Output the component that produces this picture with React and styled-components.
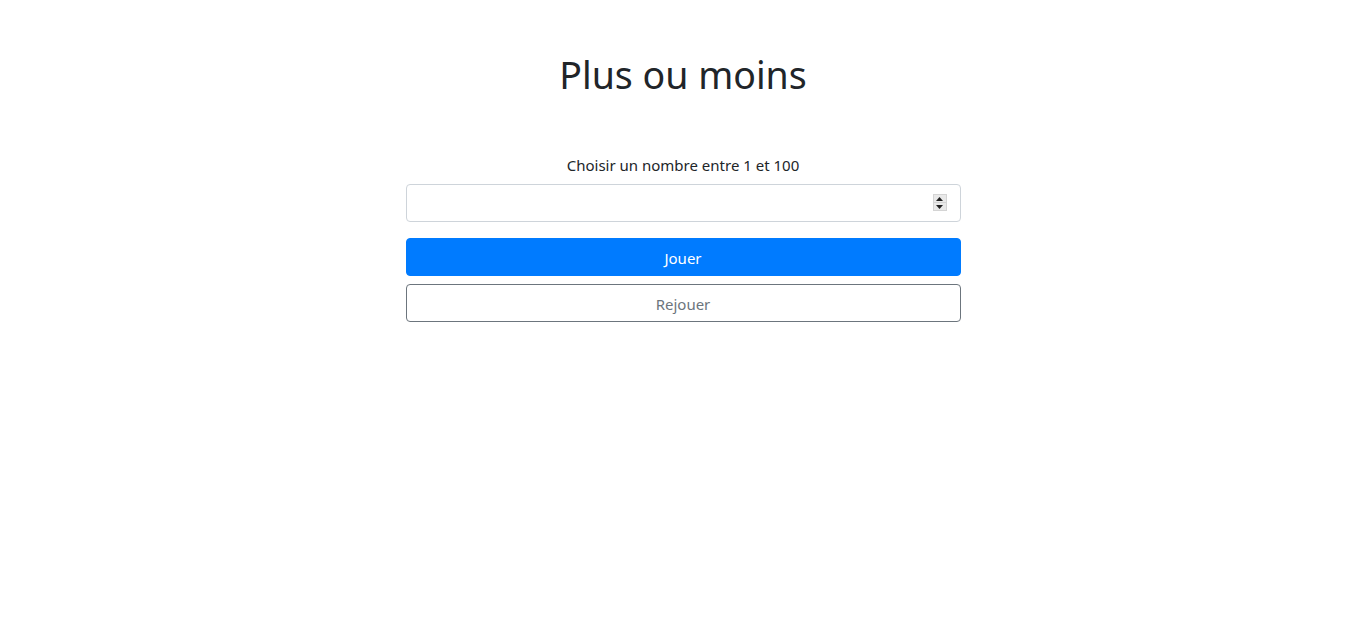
import React from "react";
import styled, { createGlobalStyle } from "styled-components";

const Global = createGlobalStyle`
  html, body { margin: 0; padding: 0; background: #fff; }
  body {
    font-family: "Noto Sans", "Open Sans", sans-serif;
    font-size: 15px;
    line-height: 1.5;
    color: #212529;
  }
  * { box-sizing: border-box; }
`;

const Page = styled.main`
  width: 555px;
  margin: 0 auto;
  padding-top: 51px;
  display: flex;
  flex-direction: column;
`;

const Title = styled.h1`
  margin: 0 0 54px;
  font-size: 37.5px;
  font-weight: 400;
  line-height: 48px;
  text-align: center;
  color: #212529;
`;

const Label = styled.label`
  display: block;
  text-align: center;
  margin-bottom: 7px;
  font-size: 15px;
  line-height: 24px;
`;

const Field = styled.div`
  position: relative;
  margin-bottom: 16px;
`;

const Input = styled.input`
  display: block;
  width: 100%;
  height: 38px;
  padding: 6px 12px;
  font: inherit;
  border: 1px solid #ced4da;
  border-radius: 4px;
  color: #495057;
  outline: none;
  -moz-appearance: textfield;
  &::-webkit-inner-spin-button,
  &::-webkit-outer-spin-button {
    -webkit-appearance: none;
    margin: 0;
  }
`;

const Spinner = styled.span`
  position: absolute;
  right: 14px;
  top: 10px;
  width: 14px;
  height: 17px;
  display: flex;
  flex-direction: column;
  pointer-events: none;
`;

const SpinHalf = styled.span`
  flex: 1;
  display: flex;
  align-items: center;
  justify-content: center;
  background: #e9e9e9;
  border: 1px solid #d4d4d4;
  & + & { border-top: none; }
`;

const Button = styled.button`
  display: block;
  width: 100%;
  height: 38px;
  padding: 7px 12px 5px;
  font: inherit;
  font-size: 15px;
  line-height: 24px;
  border-radius: 4px;
  cursor: pointer;
  border: 1px solid ${(p) => (p.$variant === "primary" ? "#007bff" : "#6c757d")};
  background: ${(p) => (p.$variant === "primary" ? "#007bff" : "#fff")};
  color: ${(p) => (p.$variant === "primary" ? "#fff" : "#6c757d")};
  & + & { margin-top: 8px; }
`;

export default function App() {
  return (
    <>
      <Global />
      <Page>
        <Title>Plus ou moins</Title>
        <Label htmlFor="nb">Choisir un nombre entre 1 et 100</Label>
        <Field>
          <Input id="nb" type="number" min="1" max="100" />
          <Spinner>
            <SpinHalf>
              <svg width="7" height="4" viewBox="0 0 7 4">
                <path d="M0 4 L3.5 0 L7 4 Z" fill="#222" />
              </svg>
            </SpinHalf>
            <SpinHalf>
              <svg width="7" height="4" viewBox="0 0 7 4">
                <path d="M0 0 L3.5 4 L7 0 Z" fill="#222" />
              </svg>
            </SpinHalf>
          </Spinner>
        </Field>
        <Button $variant="primary">Jouer</Button>
        <Button $variant="secondary">Rejouer</Button>
      </Page>
    </>
  );
}
